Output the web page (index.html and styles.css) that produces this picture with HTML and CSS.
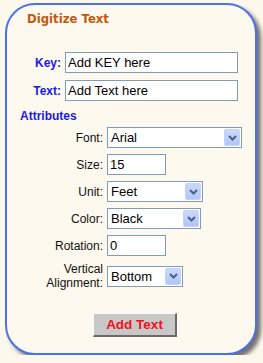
FILE: index.html
```html
<!DOCTYPE html>
<html>
<head>
<meta charset="utf-8">
<link rel="stylesheet" href="styles.css">
</head>
<body>
<div class="panel">
  <h1 class="title">Digitize Text</h1>
  <div class="keygrid">
    <label class="klabel">Key:</label>
    <div class="input wide">Add KEY here</div>
    <label class="klabel">Text:</label>
    <div class="input wide">Add Text here</div>
  </div>
  <h2 class="attrs">Attributes</h2>
  <div class="attrgrid">
    <label class="alabel">Font:</label>
    <div class="select w-font"><span class="val">Arial</span><span class="arrow"><svg width="9" height="6" viewBox="0 0 9 6"><path d="M1 1 L4.5 4.5 L8 1" fill="none" stroke="#4d5f86" stroke-width="2"/></svg></span></div>
    <label class="alabel">Size:</label>
    <div class="input small">15</div>
    <label class="alabel">Unit:</label>
    <div class="select w-unit"><span class="val">Feet</span><span class="arrow"><svg width="9" height="6" viewBox="0 0 9 6"><path d="M1 1 L4.5 4.5 L8 1" fill="none" stroke="#4d5f86" stroke-width="2"/></svg></span></div>
    <label class="alabel">Color:</label>
    <div class="select w-color"><span class="val">Black</span><span class="arrow"><svg width="9" height="6" viewBox="0 0 9 6"><path d="M1 1 L4.5 4.5 L8 1" fill="none" stroke="#4d5f86" stroke-width="2"/></svg></span></div>
    <label class="alabel">Rotation:</label>
    <div class="input small">0</div>
    <label class="alabel two">Vertical<br>Alignment:</label>
    <div class="select w-valign"><span class="val">Bottom</span><span class="arrow"><svg width="9" height="6" viewBox="0 0 9 6"><path d="M1 1 L4.5 4.5 L8 1" fill="none" stroke="#4d5f86" stroke-width="2"/></svg></span></div>
  </div>
  <div class="btnrow"><button class="btn">Add Text</button></div>
</div>
</body>
</html>
```
FILE: styles.css
```css
html, body {
  margin: 0;
  padding: 0;
  background: #fcf8ec;
  font-family: "Liberation Sans", Arial, sans-serif;
}
.panel {
  box-sizing: border-box;
  margin: 3px 0 0 5px;
  width: 252px;
  height: 352px;
  border: 2px solid #4a72ea;
  border-radius: 30px;
  background: #fdf9ee;
  box-shadow: 4px 4px 4px rgba(0,0,0,0.55);
  overflow: hidden;
}
.title {
  margin: 7px 0 0 20px;
  font-family: "DejaVu Sans", Verdana, sans-serif;
  font-weight: bold;
  font-size: 11.7px;
  line-height: 14px;
  color: #c05a10;
}
.keygrid {
  display: grid;
  grid-template-columns: 54px 173px;
  column-gap: 4px;
  row-gap: 7px;
  align-items: center;
  margin-top: 26px;
}
.klabel {
  text-align: right;
  font-weight: bold;
  font-size: 12px;
  color: #1a1ae6;
}
.input {
  box-sizing: border-box;
  height: 21px;
  border: 1px solid #7f9db9;
  background: #fff;
  font-size: 13px;
  line-height: 19px;
  padding-left: 2px;
  color: #000;
  white-space: nowrap;
}
.wide { width: 173px; }
.small { width: 59px; }
.attrs {
  margin: 8px 0 0 13px;
  font-size: 12px;
  line-height: 14px;
  font-weight: bold;
  color: #1a1ae6;
}
.attrgrid {
  display: grid;
  grid-template-columns: 96px auto;
  column-gap: 4px;
  row-gap: 6px;
  align-items: center;
  justify-items: start;
  margin-top: 4px;
}
.alabel {
  justify-self: end;
  text-align: right;
  font-size: 12px;
  line-height: 14px;
  color: #111;
}
.select {
  box-sizing: border-box;
  height: 21px;
  border: 1px solid #7f9db9;
  background: #fff;
  display: flex;
  align-items: center;
  font-size: 13px;
  color: #000;
}
.select .val {
  flex: 1;
  padding-left: 3px;
}
.select .arrow {
  box-sizing: border-box;
  width: 16px;
  height: 17px;
  margin-right: 1px;
  border: 1px solid #c3d3fb;
  border-radius: 2px;
  background: linear-gradient(#c9d9fd, #b1c6f6);
  display: flex;
  align-items: center;
  justify-content: center;
}
.w-font { width: 135px; }
.w-unit { width: 96px; }
.w-color { width: 94px; }
.w-valign { width: 76px; }
.btnrow {
  margin-top: 23px;
  padding-left: 86px;
}
.btn {
  box-sizing: border-box;
  width: 84px;
  height: 24px;
  background: #c8c8c8;
  border-style: solid;
  border-width: 1px 2px 2px 1px;
  border-color: #fafafa #6a6a6a #6a6a6a #fafafa;
  font-family: "Liberation Sans", Arial, sans-serif;
  font-weight: bold;
  font-size: 13.5px;
  color: #f01020;
  padding: 0;
}
```
